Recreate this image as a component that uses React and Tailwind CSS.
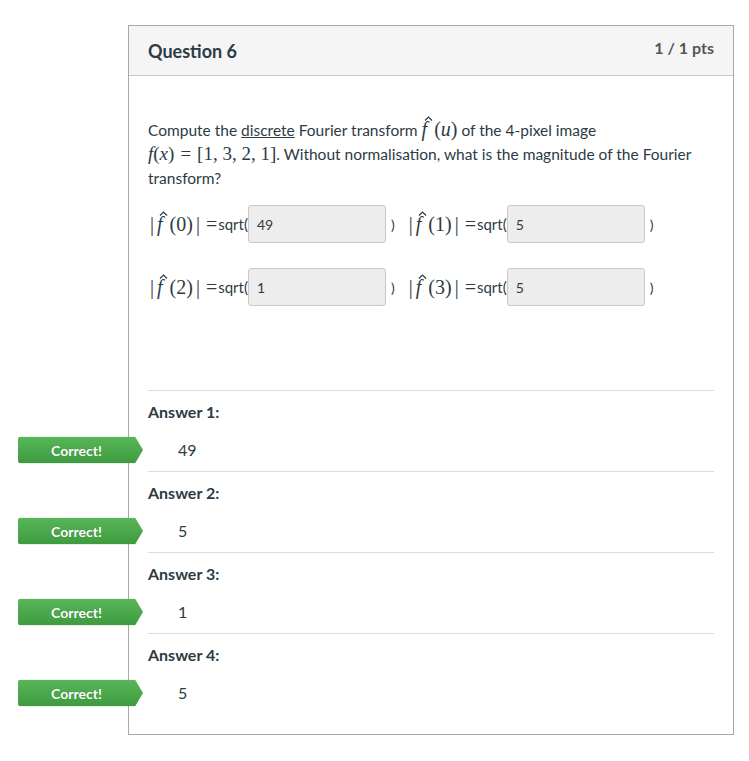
import React from "react";

const serif = "font-['Liberation_Serif','DejaVu_Serif',serif]";

function Hat() {
  return (
    <svg
      className="absolute left-[2px] top-[-3px]"
      width="9"
      height="5"
      viewBox="0 0 9 5"
    >
      <polyline points="1,4.5 4.5,1 8,4.5" fill="none" stroke="#2d3b45" strokeWidth="1.2" />
    </svg>
  );
}

function FHat({ arg }) {
  return (
    <span className={`${serif} text-[20px] leading-none whitespace-nowrap`}>
      <span className="relative inline-block italic">
        f
        <Hat />
      </span>
      <span className="ml-[7px]">({arg})</span>
    </span>
  );
}

function Field({ label, value }) {
  return (
    <div className="flex items-center">
      <span className={`${serif} text-[20px] ml-[2px] mr-[3px]`}>|</span>
      <FHat arg={label} />
      <span className={`${serif} text-[20px] ml-[3px] mr-[6px]`}>|</span>
      <span className={`${serif} text-[20px] mr-[1px]`}>=</span>
      <span>sqrt(</span>
      <div className="w-[138px] h-[38px] bg-[#ededed] border border-[#c8c8c8] rounded-[3px] px-[8px] pt-[8px] text-[14px] text-[#2d3b45]">
        {value}
      </div>
      <span className="ml-[5px] text-[14px]">)</span>
    </div>
  );
}

function Badge() {
  return (
    <div className="absolute left-[-130px] top-1/2 -translate-y-1/2 w-[125px] h-[27px] [clip-path:polygon(0_0,117px_0,125px_50%,117px_100%,0_100%)] bg-gradient-to-b from-[#58b758] to-[#3e9a3e] rounded-l-[3px]">
      <div className="w-[117px] h-full flex items-center justify-center text-white font-bold text-[14px] [text-shadow:0_0_1px_rgba(0,0,0,0.25)]">
        Correct!
      </div>
    </div>
  );
}

function Answer({ n, value, last }) {
  return (
    <div className={`pt-[11px] ${last ? "pb-[29px]" : "pb-[9px] border-b border-[#dcdcdc]"}`}>
      <div className="font-bold text-[16px] leading-[20px]">Answer {n}:</div>
      <div className="relative mt-[16px] pl-[30px] leading-[24px] text-[16px]">
        <Badge />
        {value}
      </div>
    </div>
  );
}

export default function App() {
  return (
    <div className="min-h-[761px] bg-white font-['Lato','Noto_Sans',sans-serif] text-[#2d3b45] pt-[25px]">
      <div className="ml-[128px] w-[606px] border border-[#a8a8a8]">
        <div className="h-[50px] bg-[#f5f5f5] border-b border-[#c7c7c7] px-[19px] flex justify-between">
          <div className="font-bold text-[18px] pt-[12px] text-[#2d3b45]">Question 6</div>
          <div className="font-bold text-[16px] pt-[10px] text-[#555]">1 / 1 pts</div>
        </div>
        <div className="px-[19px] pt-[42px]">
          <div className="text-[15.5px] leading-[24px]">
            Compute the <span className="underline">discrete</span> Fourier transform{" "}
            <FHat arg={<span className="italic">u</span>} /> of the 4-pixel image
            <br />
            <span className={`${serif} text-[19px] leading-none`}>
              <span className="italic">f</span>(<span className="italic">x</span>)
              <span className="mx-[6px]">=</span>[1, 3, 2, 1]
            </span>
            . Without normalisation, what is the magnitude of the Fourier transform?
          </div>
          <div className="mt-[15px] flex flex-col gap-[25px] text-[15px]">
            <div className="flex gap-[12px]">
              <Field label="0" value="49" />
              <Field label="1" value="5" />
            </div>
            <div className="flex gap-[12px]">
              <Field label="2" value="1" />
              <Field label="3" value="5" />
            </div>
          </div>
          <div className="mt-[84px] border-t border-[#dcdcdc]">
            <Answer n={1} value="49" />
            <Answer n={2} value="5" />
            <Answer n={3} value="1" />
            <Answer n={4} value="5" last />
          </div>
        </div>
      </div>
    </div>
  );
}
